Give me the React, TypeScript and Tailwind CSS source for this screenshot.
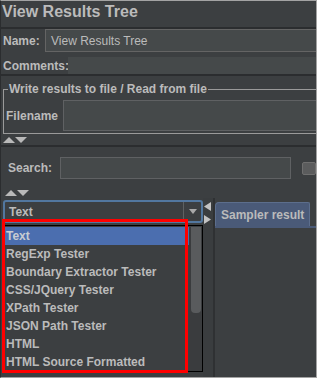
import React from "react";

const items = [
  "Text",
  "RegExp Tester",
  "Boundary Extractor Tester",
  "CSS/JQuery Tester",
  "XPath Tester",
  "JSON Path Tester",
  "HTML",
  "HTML Source Formatted",
];

function UpDown() {
  return (
    <svg width="24" height="6" viewBox="0 0 24 6" className="block">
      <polygon points="0,6 6,0 12,6" fill="#b9b9b9" />
      <polygon points="12,0 24,0 18,6" fill="#b9b9b9" />
    </svg>
  );
}

export default function App() {
  return (
    <div className="relative w-[317px] h-[378px] overflow-hidden bg-[#3c3f41] border border-t-[#a3a3a3] border-r-[#a3a3a3] border-b-[#a3a3a3] border-l-[#2b2d2f] text-[#bbbbbb] font-['Liberation_Sans',Arial,sans-serif] text-[12px] leading-[14px] flex flex-col">
      <div className="h-[26px] shrink-0 pt-[2px] pl-[1px] text-[16px] leading-[18px] font-bold">
        View Results Tree
      </div>
      <div className="h-[2px] shrink-0 bg-[#2b2d2f]" />
      <div className="flex h-[23px] shrink-0 items-center">
        <div className="w-[44px] pl-[2px] font-bold">Name:</div>
        <div className="flex-1 -mr-[2px] h-full border border-[#646464] bg-[#45494a] pl-[5px] flex items-center">
          View Results Tree
        </div>
      </div>
      <div className="h-[22px] shrink-0 pt-[5px]">
        <div className="flex h-[17px] items-center">
          <div className="w-[67px] pl-[2px] font-bold whitespace-nowrap">Comments:</div>
          <div className="flex-1 h-full bg-[#45494a]" />
        </div>
      </div>
      <div className="h-[2px] shrink-0 bg-[#2b2d2f]" />

      <fieldset className="mt-[6px] ml-[2px] -mr-[4px] shrink-0 border border-[#9a9a9a] p-0 pb-[2px] min-w-0">
        <legend className="ml-[4px] px-[1px] font-bold leading-[14px]">
          Write results to file / Read from file
        </legend>
        <div className="mt-[4px] flex h-[31px] items-center">
          <div className="w-[59px] pl-[2px] font-bold">Filename</div>
          <div className="flex-1 h-full border border-[#5f6163] bg-[#45494a]" />
        </div>
      </fieldset>

      <div className="mt-[3px] pl-[2px] h-[6px] shrink-0">
        <UpDown />
      </div>
      <div className="mt-[2px] h-[2px] shrink-0 bg-[#2b2d2f]" />

      <div className="mt-[10px] flex h-[22px] shrink-0 items-center">
        <div className="w-[59px] pl-[7px] font-bold">Search:</div>
        <div className="w-[233px] h-full border border-[#5f6163] bg-[#45494a]" />
        <div className="ml-[11px] w-[14px] h-[13px] rounded-[2px] border border-[#6f6f6f] bg-[#5b5c5d]" />
      </div>

      <div className="mt-[11px] pl-[4px] h-[6px] shrink-0">
        <UpDown />
      </div>

      <div className="mt-[2px] flex flex-1">
        <div className="w-[202px] pt-[2px] pl-[2px]">
          <div className="w-[200px] h-[23px] rounded-[3px] border-2 border-[#52779f] bg-[#3c3f41] flex">
            <div className="flex-1 pl-[4px] flex items-center font-bold">Text</div>
            <div className="w-[18px] border-l border-[#5e6162] flex items-center justify-center">
              <svg width="8" height="5" viewBox="0 0 8 5" className="block">
                <polygon points="0,0 8,0 4,5" fill="#a9a9a9" />
              </svg>
            </div>
          </div>
        </div>
        <div className="w-[12px] bg-[#3a3d3f] border-r-2 border-[#2f3133] pt-[4px] pl-[1px] flex flex-col">
          <svg width="7" height="9" viewBox="0 0 7 9" className="block">
            <polygon points="7,0 7,9 0,4.5" fill="#c2c2c2" />
          </svg>
          <svg width="7" height="9" viewBox="0 0 7 9" className="block mt-[4px]">
            <polygon points="0,0 0,9 7,4.5" fill="#c2c2c2" />
          </svg>
        </div>
        <div className="flex-1 pt-[4px] flex flex-col">
          <div className="w-[95px] h-[24px] rounded-tl-[4px] rounded-tr-[2px] border-t border-l border-r border-[#5c6e8c] bg-[#4a5a78] pl-[5px] flex items-center font-bold whitespace-nowrap">
            Sampler result
          </div>
          <div className="h-[2px] bg-[#4a5a78]" />
        </div>
      </div>

      {/* dropdown popup */}
      <div className="absolute left-[2px] top-[224px] w-[200px] border border-black bg-[#3c3f41] pt-[1px] flex">
        <div className="flex-1 flex flex-col">
          {items.map((t, i) => (
            <div
              key={t}
              className={
                "h-[18px] pl-[2px] flex items-center font-bold whitespace-nowrap " +
                (i === 0 ? "bg-[#4b6eaf] text-[#c8ccd2]" : "")
              }
            >
              {t}
            </div>
          ))}
        </div>
        <div className="w-[13px] bg-[#3a3c3e]">
          <div className="ml-[2px] w-[10px] h-[86px] bg-[#595b5d] rounded-b-[4px]" />
        </div>
      </div>

      {/* red annotation */}
      <div className="absolute left-[1px] top-[218px] w-[186px] h-[154px] border-[3px] border-[#ff0000]" />
    </div>
  );
}
